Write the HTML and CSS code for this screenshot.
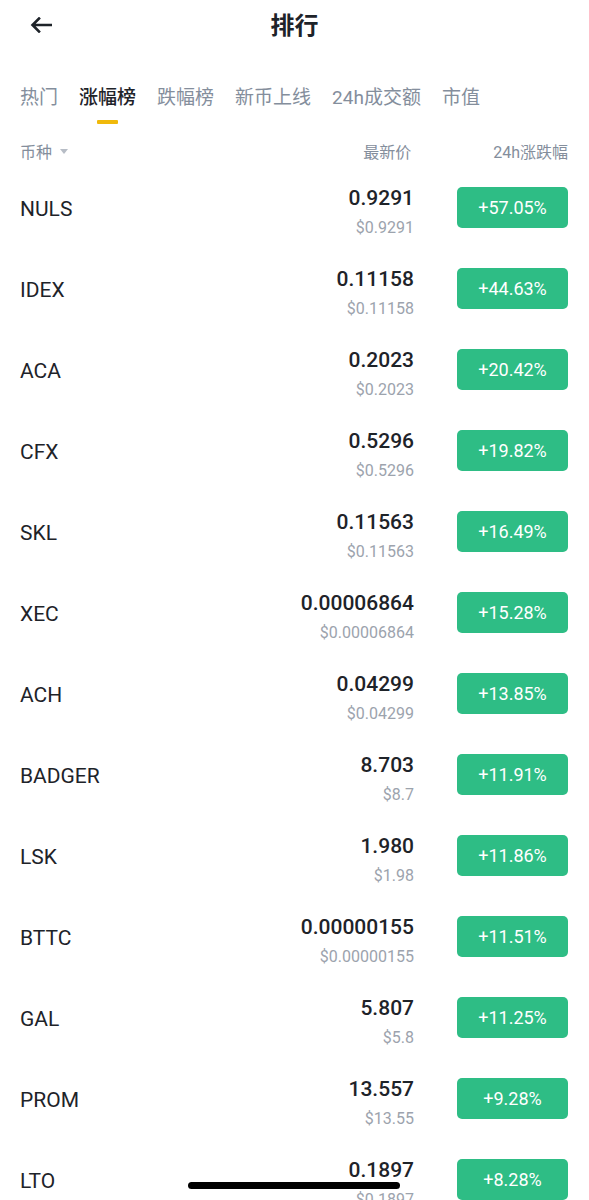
FILE: index.html
```html
<!DOCTYPE html>
<html lang="zh-CN">
<head>
  <meta charset="UTF-8">
  <meta name="viewport" content="width=device-width, initial-scale=1.0">
  <title>排行</title>
  <link rel="stylesheet" href="styles.css">
</head>
<body>
  <div class="nav">
    <span class="back">
      <svg width="22" height="16" viewBox="0 0 22 16">
        <path d="M21 8H3M9 1.5L2.5 8L9 14.5" fill="none" stroke="#1e2329" stroke-width="2.6" stroke-linecap="square"/>
      </svg>
    </span>
    <h1>排行</h1>
  </div>

  <div class="tabs">
    <div class="tab">热门</div>
    <div class="tab active">涨幅榜</div>
    <div class="tab">跌幅榜</div>
    <div class="tab">新币上线</div>
    <div class="tab">24h成交额</div>
    <div class="tab">市值</div>
  </div>

  <div class="col-head">
    <div class="col-coin">币种 <span class="caret"></span></div>
    <div class="col-price">最新价</div>
    <div class="col-change">24h涨跌幅</div>
  </div>

  <div class="list">
    <div class="row">
      <div class="symbol">NULS</div>
      <div class="price"><div class="last">0.9291</div><div class="usd">$0.9291</div></div>
      <div class="badge">+57.05%</div>
    </div>
    <div class="row">
      <div class="symbol">IDEX</div>
      <div class="price"><div class="last">0.11158</div><div class="usd">$0.11158</div></div>
      <div class="badge">+44.63%</div>
    </div>
    <div class="row">
      <div class="symbol">ACA</div>
      <div class="price"><div class="last">0.2023</div><div class="usd">$0.2023</div></div>
      <div class="badge">+20.42%</div>
    </div>
    <div class="row">
      <div class="symbol">CFX</div>
      <div class="price"><div class="last">0.5296</div><div class="usd">$0.5296</div></div>
      <div class="badge">+19.82%</div>
    </div>
    <div class="row">
      <div class="symbol">SKL</div>
      <div class="price"><div class="last">0.11563</div><div class="usd">$0.11563</div></div>
      <div class="badge">+16.49%</div>
    </div>
    <div class="row">
      <div class="symbol">XEC</div>
      <div class="price"><div class="last">0.00006864</div><div class="usd">$0.00006864</div></div>
      <div class="badge">+15.28%</div>
    </div>
    <div class="row">
      <div class="symbol">ACH</div>
      <div class="price"><div class="last">0.04299</div><div class="usd">$0.04299</div></div>
      <div class="badge">+13.85%</div>
    </div>
    <div class="row">
      <div class="symbol">BADGER</div>
      <div class="price"><div class="last">8.703</div><div class="usd">$8.7</div></div>
      <div class="badge">+11.91%</div>
    </div>
    <div class="row">
      <div class="symbol">LSK</div>
      <div class="price"><div class="last">1.980</div><div class="usd">$1.98</div></div>
      <div class="badge">+11.86%</div>
    </div>
    <div class="row">
      <div class="symbol">BTTC</div>
      <div class="price"><div class="last">0.00000155</div><div class="usd">$0.00000155</div></div>
      <div class="badge">+11.51%</div>
    </div>
    <div class="row">
      <div class="symbol">GAL</div>
      <div class="price"><div class="last">5.807</div><div class="usd">$5.8</div></div>
      <div class="badge">+11.25%</div>
    </div>
    <div class="row">
      <div class="symbol">PROM</div>
      <div class="price"><div class="last">13.557</div><div class="usd">$13.55</div></div>
      <div class="badge">+9.28%</div>
    </div>
    <div class="row">
      <div class="symbol">LTO</div>
      <div class="price"><div class="last">0.1897</div><div class="usd">$0.1897</div></div>
      <div class="badge">+8.28%</div>
    </div>
  </div>

  <div class="home-bar"></div>
</body>
</html>
```

FILE: styles.css
```css
body {
  margin: 0;
  background: #fff;
  color: #1e2329;
  font-family: Roboto, "Noto Sans CJK SC", sans-serif;
  overflow: hidden;
}
.nav {
  position: relative;
  height: 52px;
  display: flex;
  align-items: center;
  justify-content: center;
}
.back {
  position: absolute;
  left: 30px;
  top: 17px;
  display: flex;
}
.nav h1 {
  margin: 0;
  font-size: 24px;
  font-weight: 700;
  line-height: 52px;
}
.tabs {
  display: flex;
  gap: 21px;
  padding: 0 20px;
}
.tab {
  padding-top: 34px;
  font-size: 19px;
  line-height: 24px;
  color: #848e9c;
  display: flex;
  flex-direction: column;
  align-items: center;
}
.tab::after {
  content: "";
  width: 21px;
  height: 4px;
  margin-top: 10px;
  border-radius: 1px;
  background: transparent;
}
.tab.active {
  color: #1e2329;
  font-weight: 500;
}
.tab.active::after {
  background: #f0b90b;
}
.col-head {
  display: flex;
  align-items: center;
  margin-top: 17px;
  padding: 0 21px 0 20px;
  height: 20px;
  font-size: 16px;
  color: #848e9c;
}
.col-coin {
  flex: 1;
  display: flex;
  align-items: center;
}
.caret {
  width: 0;
  height: 0;
  margin-left: 8px;
  border-left: 4px solid transparent;
  border-right: 4px solid transparent;
  border-top: 5px solid #b7bdc6;
}
.col-price {
  margin-right: 82px;
}
.list {
  padding-top: 6px;
}
.row {
  height: 81px;
  box-sizing: border-box;
  display: flex;
  align-items: center;
  padding: 0 21px 0 20px;
}
.symbol {
  flex: 1;
  padding-top: 2px;
  font-size: 21px;
}
.price {
  align-self: flex-start;
  padding-top: 19px;
  margin-right: 43px;
  text-align: right;
}
.last {
  font-size: 21px;
  font-weight: 500;
  line-height: 24px;
}
.usd {
  margin-top: 9px;
  font-size: 16px;
  line-height: 18px;
  color: #9ca3ad;
}
.badge {
  width: 111px;
  height: 41px;
  border-radius: 5px;
  background: #2ebd85;
  color: #fff;
  font-size: 18px;
  display: flex;
  align-items: center;
  justify-content: center;
}
.home-bar {
  position: fixed;
  left: 188px;
  top: 1182px;
  width: 212px;
  height: 7px;
  border-radius: 4px;
  background: #000;
}
```
